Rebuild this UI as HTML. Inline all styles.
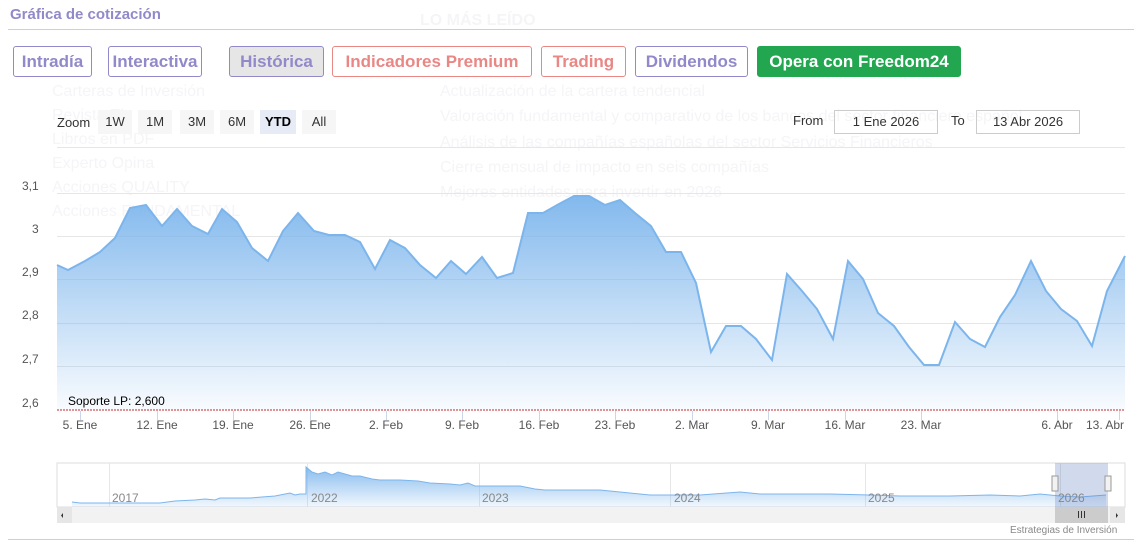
<!DOCTYPE html>
<html><head><meta charset="utf-8"><style>
body{margin:0;width:1142px;height:551px;background:#fff;font-family:"Liberation Sans",sans-serif;position:relative;overflow:hidden}
.a{position:absolute;white-space:nowrap}
.g{color:#f5f5f8;font-size:16px}
.btn{position:absolute;top:46px;height:31px;box-sizing:border-box;border:1px solid #9189c9;border-radius:3px;font-weight:bold;font-size:17px;color:#9189c9;text-align:center;line-height:29px}
.r{border-color:#e98785;color:#e98785}
.z{position:absolute;top:110px;height:24px;line-height:24px;font-size:13px;background:#f6f6f6;text-align:center;color:#333}
.xl{position:absolute;top:418px;font-size:12px;color:#555;width:60px;text-align:center}
.yl{position:absolute;font-size:12px;color:#555;left:22px}
.nl{position:absolute;top:491px;font-size:12px;color:#888}
.inp{position:absolute;top:110px;height:24px;box-sizing:border-box;border:1px solid #ccc;font-size:13px;line-height:22px;text-align:center;color:#333}
</style></head><body>
<div class="a" style="left:10px;top:6px;font-size:15px;font-weight:bold;color:#9189c9">Gráfica de cotización</div>
<div class="a" style="left:8px;top:29px;width:1126px;height:1px;background:#cfcbe0"></div>
<div class="a g" style="left:52px;top:83px">Carteras de Inversión</div>
<div class="a g" style="left:52px;top:107px">Revista El</div>
<div class="a g" style="left:52px;top:131px">Libros en PDF</div>
<div class="a g" style="left:52px;top:155px">Experto Opina</div>
<div class="a g" style="left:52px;top:179px">Acciones QUALITY</div>
<div class="a g" style="left:52px;top:203px">Acciones FUNDAMENTAL</div>
<div class="a g" style="left:420px;top:12px;font-weight:bold">LO MÁS LEÍDO</div>
<div class="a g" style="left:440px;top:83px">Actualización de la cartera tendencial</div>
<div class="a g" style="left:440px;top:108px">Valoración fundamental y comparativo de los bancos del sector financiero español</div>
<div class="a g" style="left:440px;top:134px">Análisis de las compañías españolas del sector Servicios Financieros</div>
<div class="a g" style="left:440px;top:159px">Cierre mensual de impacto en seis compañías</div>
<div class="a g" style="left:440px;top:184px">Mejores entidades para invertir en 2026</div>

<div class="btn" style="left:13px;width:79px">Intradía</div>
<div class="btn" style="left:108px;width:94px">Interactiva</div>
<div class="btn" style="left:229px;width:95px;background:#e6e6e6">Histórica</div>
<div class="btn r" style="left:332px;width:200px">Indicadores Premium</div>
<div class="btn r" style="left:541px;width:85px">Trading</div>
<div class="btn" style="left:635px;width:113px">Dividendos</div>
<div class="btn" style="left:757px;width:204px;background:#22a64f;border-color:#22a64f;color:#fff">Opera con Freedom24</div>

<div class="a" style="left:57px;top:115px;font-size:13px;color:#333">Zoom</div>
<div class="z" style="left:98px;width:34px">1W</div>
<div class="z" style="left:138px;width:34px">1M</div>
<div class="z" style="left:180px;width:34px">3M</div>
<div class="z" style="left:220px;width:34px">6M</div>
<div class="z" style="left:260px;width:36px;background:#e6ebf5;font-weight:bold;color:#000">YTD</div>
<div class="z" style="left:302px;width:34px">All</div>
<div class="a" style="left:793px;top:113px;font-size:13px;color:#333">From</div>
<div class="inp" style="left:834px;width:104px">1 Ene 2026</div>
<div class="a" style="left:951px;top:113px;font-size:13px;color:#333">To</div>
<div class="inp" style="left:976px;width:104px">13 Abr 2026</div>

<div class="yl" style="top:179px">3,1</div>
<div class="yl" style="top:222px;left:32px">3</div>
<div class="yl" style="top:265px">2,9</div>
<div class="yl" style="top:308px">2,8</div>
<div class="yl" style="top:352px">2,7</div>
<div class="yl" style="top:396px">2,6</div>

<svg class="a" style="left:0;top:0" width="1142" height="551">
<defs>
<linearGradient id="f" x1="0" y1="0" x2="0" y2="1"><stop offset="0" stop-color="#7cb5ec" stop-opacity=".95"/><stop offset="1" stop-color="#7cb5ec" stop-opacity=".05"/></linearGradient>
<linearGradient id="f2" x1="0" y1="0" x2="0" y2="1"><stop offset="0" stop-color="#7cb5ec" stop-opacity=".9"/><stop offset="1" stop-color="#7cb5ec" stop-opacity=".1"/></linearGradient>
</defs>
<g stroke="#e6e6e6" stroke-width="1">
<line x1="57" y1="147.5" x2="1125" y2="147.5"/><line x1="57" y1="193.5" x2="1125" y2="193.5"/><line x1="57" y1="236.5" x2="1125" y2="236.5"/><line x1="57" y1="279.5" x2="1125" y2="279.5"/><line x1="57" y1="323.5" x2="1125" y2="323.5"/><line x1="57" y1="366.5" x2="1125" y2="366.5"/>
</g>
<path d="M57,265 L68,270 85,261 100,252 115,238 130,208 146,205 162,226 177,209 192,226 208,234 222,209 237,222 252,248 268,261 283,231 298,213 314,231 329,235 345,235 360,242 375,269 390,240 405,248 420,265 436,278 451,261 466,274 482,257 497,278 513,273 528,213 543,213 559,204 574,196 589,196 605,205 620,200 635,213 651,226 666,252 681,252 696,283 711,352 726,326 741,326 756,339 772,360 787,274 802,291 817,309 833,339 848,261 863,279 878,313 894,326 909,347 924,365 939,365 955,322 970,339 985,347 1000,317 1015,295 1031,261 1046,291 1061,309 1077,321 1092,346 1107,291 1125,256 L1125,410 L57,410 Z" fill="url(#f)"/>
<path d="M57,265 L68,270 85,261 100,252 115,238 130,208 146,205 162,226 177,209 192,226 208,234 222,209 237,222 252,248 268,261 283,231 298,213 314,231 329,235 345,235 360,242 375,269 390,240 405,248 420,265 436,278 451,261 466,274 482,257 497,278 513,273 528,213 543,213 559,204 574,196 589,196 605,205 620,200 635,213 651,226 666,252 681,252 696,283 711,352 726,326 741,326 756,339 772,360 787,274 802,291 817,309 833,339 848,261 863,279 878,313 894,326 909,347 924,365 939,365 955,322 970,339 985,347 1000,317 1015,295 1031,261 1046,291 1061,309 1077,321 1092,346 1107,291 1125,256" fill="none" stroke="#7cb5ec" stroke-width="2"/>
<line x1="57" y1="410" x2="1125" y2="410" stroke="#c0282d" stroke-dasharray="2,1" stroke-width="1"/>
<g stroke="#ccd6eb"><line x1="80.5" y1="411" x2="80.5" y2="420"/><line x1="157.5" y1="411" x2="157.5" y2="420"/><line x1="233.5" y1="411" x2="233.5" y2="420"/><line x1="310.5" y1="411" x2="310.5" y2="420"/><line x1="386.5" y1="411" x2="386.5" y2="420"/><line x1="462.5" y1="411" x2="462.5" y2="420"/><line x1="539.5" y1="411" x2="539.5" y2="420"/><line x1="615.5" y1="411" x2="615.5" y2="420"/><line x1="692.5" y1="411" x2="692.5" y2="420"/><line x1="768.5" y1="411" x2="768.5" y2="420"/><line x1="845.5" y1="411" x2="845.5" y2="420"/><line x1="921.5" y1="411" x2="921.5" y2="420"/><line x1="1057.5" y1="411" x2="1057.5" y2="420"/><line x1="1119.5" y1="411" x2="1119.5" y2="420"/></g>
<rect x="57" y="463" width="1068" height="44" fill="#fff" stroke="#ddd"/>
<g stroke="#e6e6e6"><line x1="109.5" y1="463" x2="109.5" y2="507"/><line x1="307.5" y1="463" x2="307.5" y2="507"/><line x1="479.5" y1="463" x2="479.5" y2="507"/><line x1="670.5" y1="463" x2="670.5" y2="507"/><line x1="865.5" y1="463" x2="865.5" y2="507"/><line x1="1060.5" y1="463" x2="1060.5" y2="507"/></g>
<path d="M72,502 L80,503 100,503 160,503 175,501 195,500 205,499 215,500 220,498 250,498 275,496 290,493 295,495 300,494 306,494 306,467 312,472 318,474 325,472 332,475 338,472 345,474 352,476 360,476 372,479 380,480 400,480 418,481 430,483 450,484 460,485 468,483 475,486 500,486 520,486 535,489 545,490 570,490 600,490 620,492 650,495 700,495 740,492 760,494 790,494 830,494 870,495 900,496 950,496 990,495 1020,496 1040,494 1060,496 1080,497 1106,495 L1106,507 L72,507 Z" fill="url(#f2)"/>
<path d="M72,502 L80,503 100,503 160,503 175,501 195,500 205,499 215,500 220,498 250,498 275,496 290,493 295,495 300,494 306,494 306,467 312,472 318,474 325,472 332,475 338,472 345,474 352,476 360,476 372,479 380,480 400,480 418,481 430,483 450,484 460,485 468,483 475,486 500,486 520,486 535,489 545,490 570,490 600,490 620,492 650,495 700,495 740,492 760,494 790,494 830,494 870,495 900,496 950,496 990,495 1020,496 1040,494 1060,496 1080,497 1106,495" fill="none" stroke="#7cb5ec" stroke-width="1"/>
<rect x="1055" y="463" width="53" height="44" fill="#6685c2" fill-opacity=".3"/>
<rect x="1052" y="476" width="6" height="15" fill="#f2f2f2" stroke="#999"/>
<rect x="1105" y="476" width="6" height="15" fill="#f2f2f2" stroke="#999"/>
<rect x="57" y="507" width="1068" height="16" fill="#f2f2f2"/>
<rect x="57" y="507" width="15" height="16" fill="#e6e6e6"/>
<rect x="1110" y="507" width="15" height="16" fill="#e6e6e6"/>
<rect x="1055" y="507" width="53" height="16" fill="#cccccc"/>
<path d="M63,513 L63,518 61,515.5 Z" fill="#333"/><path d="M1116,513 L1116,518 1118,515.5 Z" fill="#333"/>
<g stroke="#333"><line x1="1078.5" y1="511" x2="1078.5" y2="518"/><line x1="1081.5" y1="511" x2="1081.5" y2="518"/><line x1="1084.5" y1="511" x2="1084.5" y2="518"/></g>
<line x1="8" y1="539.5" x2="1134" y2="539.5" stroke="#cfcbe0"/>
</svg>
<div class="a" style="left:68px;top:394px;font-size:12px;color:#000">Soporte LP: 2,600</div>
<div class="xl" style="left:50px">5. Ene</div>
<div class="xl" style="left:127px">12. Ene</div>
<div class="xl" style="left:203px">19. Ene</div>
<div class="xl" style="left:280px">26. Ene</div>
<div class="xl" style="left:356px">2. Feb</div>
<div class="xl" style="left:432px">9. Feb</div>
<div class="xl" style="left:509px">16. Feb</div>
<div class="xl" style="left:585px">23. Feb</div>
<div class="xl" style="left:662px">2. Mar</div>
<div class="xl" style="left:738px">9. Mar</div>
<div class="xl" style="left:815px">16. Mar</div>
<div class="xl" style="left:891px">23. Mar</div>
<div class="xl" style="left:1027px">6. Abr</div>
<div class="xl" style="left:1082px;text-align:right;width:42px">13. Abr</div>
<div class="nl" style="left:112px">2017</div>
<div class="nl" style="left:311px">2022</div>
<div class="nl" style="left:482px">2023</div>
<div class="nl" style="left:674px">2024</div>
<div class="nl" style="left:868px">2025</div>
<div class="nl" style="left:1058px">2026</div>
<div class="a" style="left:1010px;top:525px;font-size:10px;color:#888">Estrategias de Inversión</div>
</body></html>
